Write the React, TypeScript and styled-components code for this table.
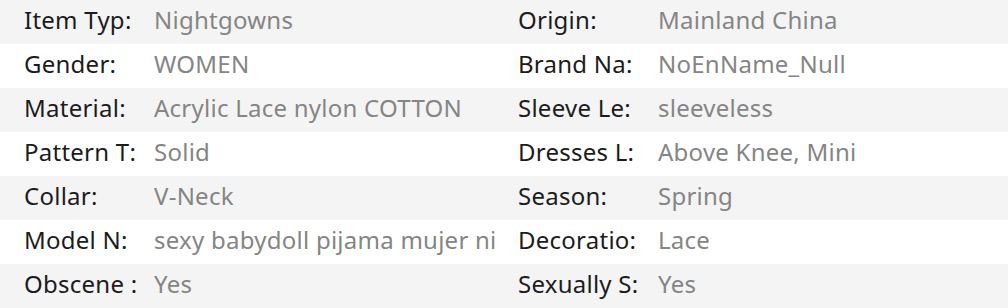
import React from 'react';
import styled, { createGlobalStyle } from 'styled-components';

const GlobalStyle = createGlobalStyle`
  html, body {
    margin: 0;
    padding: 0;
    background: #ffffff;
  }
`;

interface Spec {
  label: string;
  value: string;
}

const rows: [Spec, Spec][] = [
  [{ label: 'Item Typ:', value: 'Nightgowns' }, { label: 'Origin:', value: 'Mainland China' }],
  [{ label: 'Gender:', value: 'WOMEN' }, { label: 'Brand Na:', value: 'NoEnName_Null' }],
  [{ label: 'Material:', value: 'Acrylic Lace nylon COTTON' }, { label: 'Sleeve Le:', value: 'sleeveless' }],
  [{ label: 'Pattern T:', value: 'Solid' }, { label: 'Dresses L:', value: 'Above Knee, Mini' }],
  [{ label: 'Collar:', value: 'V-Neck' }, { label: 'Season:', value: 'Spring' }],
  [{ label: 'Model N:', value: 'sexy babydoll pijama mujer ni' }, { label: 'Decoratio:', value: 'Lace' }],
  [{ label: 'Obscene :', value: 'Yes' }, { label: 'Sexually S:', value: 'Yes' }],
];

const Table = styled.div`
  width: 1008px;
  font-family: "Noto Sans", "Open Sans", sans-serif;
  font-size: 24px;
  letter-spacing: 0.25px;
`;

const Row = styled.div<{ $shaded: boolean }>`
  box-sizing: border-box;
  display: grid;
  grid-template-columns: 130px 342px 22px 140px 1fr;
  align-items: center;
  height: 44px;
  padding: 0 0 6px 24px;
  background: ${p => (p.$shaded ? '#f4f4f4' : '#ffffff')};
`;

const Label = styled.div`
  color: #1c1c1c;
  white-space: nowrap;
`;

const Value = styled.div`
  color: #858585;
  white-space: nowrap;
  overflow: hidden;
`;

const Spacer = styled.div``;

const App: React.FC = () => {
  return (
    <>
      <GlobalStyle />
      <Table>
        {rows.map(([left, right], i) => (
          <Row key={left.label} $shaded={i % 2 === 0}>
            <Label>{left.label}</Label>
            <Value>{left.value}</Value>
            <Spacer />
            <Label>{right.label}</Label>
            <Value>{right.value}</Value>
          </Row>
        ))}
      </Table>
    </>
  );
};

export default App;
